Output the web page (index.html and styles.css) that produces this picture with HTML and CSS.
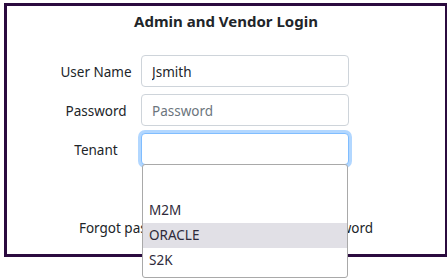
FILE: index.html
```html
<!DOCTYPE html>
<html lang="en">
<head>
    <meta charset="UTF-8">
    <title>Admin and Vendor Login</title>
    <link rel="stylesheet" href="styles.css">
</head>
<body>
    <div class="frame">
        <h1 class="title">Admin and Vendor Login</h1>

        <form class="login">
            <label class="label">User Name</label>
            <input class="field" type="text" value="Jsmith">

            <label class="label">Password</label>
            <input class="field" type="password" placeholder="Password">

            <label class="label">Tenant</label>
            <div class="select-wrap">
                <div class="field focused"></div>
                <ul class="dropdown">
                    <li class="option blank"></li>
                    <li class="option">M2M</li>
                    <li class="option active">ORACLE</li>
                    <li class="option">S2K</li>
                </ul>
            </div>
        </form>

        <p class="forgot">Forgot password? Click here to reset password</p>
    </div>
</body>
</html>
```

FILE: styles.css
```css
html, body {
    min-height: 280px;
}
body {
    margin: 0;
    background: #fff;
    font-family: 'Noto Sans', 'Open Sans', sans-serif;
    color: #212529;
}
.frame {
    box-sizing: border-box;
    width: 443px;
    height: 254px;
    margin: 3px 0 0 4px;
    border: 3px solid #2b0b3f;
    border-right-width: 2px;
}
.title {
    margin: 5px 0 0;
    font-size: 15px;
    line-height: 20px;
    font-weight: bold;
    text-align: center;
}
.login {
    display: grid;
    grid-template-columns: 90px 208px;
    row-gap: 7px;
    margin: 24px 0 0 44px;
    align-items: center;
}
.label {
    font-size: 13.5px;
    line-height: 20px;
    padding-top: 2px;
    text-align: center;
}
.field {
    box-sizing: border-box;
    width: 208px;
    height: 32px;
    margin: 0;
    padding: 1px 10px 0;
    border: 1px solid #ced4da;
    border-radius: 4px;
    font-family: inherit;
    font-size: 13.5px;
    color: #212529;
    background: #fff;
}
.field::placeholder {
    color: #6c757d;
}
.focused {
    border-color: #80bdff;
    box-shadow: 0 0 0 3px rgba(0, 123, 255, 0.3);
}
.select-wrap {
    position: relative;
}
.dropdown {
    position: absolute;
    top: 31px;
    left: 1px;
    width: 206px;
    box-sizing: border-box;
    margin: 0;
    padding: 3px 0 4px;
    list-style: none;
    background: #fff;
    border: 1px solid #a9a9a9;
    border-radius: 3px;
    z-index: 2;
}
.option {
    height: 25px;
    line-height: 25px;
    padding: 0 6px;
    font-size: 13.5px;
    color: #2e2a3a;
}
.option.blank {
    height: 30px;
}
.option.active {
    background: #e1e0e6;
}
.forgot {
    margin: 53px 0 0;
    font-size: 13.5px;
    line-height: 20px;
    text-align: center;
}
```
